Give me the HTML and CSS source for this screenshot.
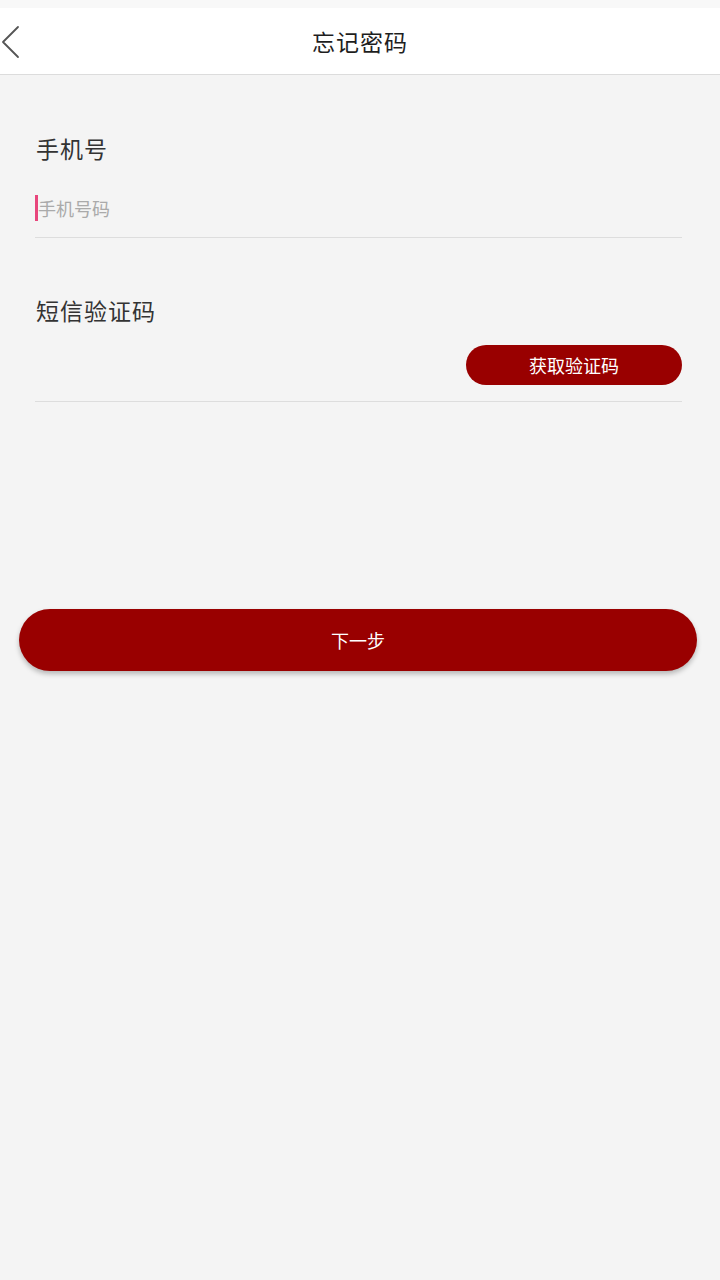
FILE: index.html
```html
<!DOCTYPE html>
<html lang="zh">
<head>
<meta charset="utf-8">
<title>忘记密码</title>
<link rel="stylesheet" href="styles.css">
</head>
<body>
<div class="statusbar"></div>
<header class="topbar">
  <span class="back">
    <svg width="20" height="34" viewBox="0 0 20 34"><path d="M17 2 L2 17 L17 32" fill="none" stroke="#555" stroke-width="1.8" stroke-linecap="round" stroke-linejoin="round"/></svg>
  </span>
  <h1 class="title">忘记密码</h1>
</header>
<main class="form">
  <section class="field field-phone">
    <div class="label">手机号</div>
    <div class="input-row phone-row">
      <span class="caret"></span><span class="placeholder">手机号码</span>
    </div>
  </section>
  <section class="field field-code">
    <div class="label">短信验证码</div>
    <div class="input-row code-row">
      <button class="code-btn">获取验证码</button>
    </div>
  </section>
</main>
<div class="next-wrap">
  <button class="next-btn">下一步</button>
</div>
</body>
</html>
```

FILE: styles.css
```css
html, body {
  margin: 0;
  padding: 0;
}
body {
  width: 720px;
  height: 1280px;
  background: #f4f4f4;
  font-family: "Noto Sans CJK SC", "Noto Sans", sans-serif;
  overflow: hidden;
}
.statusbar {
  height: 8px;
  background: #f8f8f8;
}
.topbar {
  height: 66px;
  background: #ffffff;
  border-bottom: 1px solid #dcdcdc;
  display: flex;
  align-items: center;
  justify-content: center;
  position: relative;
}
.back {
  position: absolute;
  left: 1px;
  top: 17px;
  display: flex;
}
.title {
  margin: 0;
  font-size: 23px;
  font-weight: 400;
  color: #1e1e1e;
  letter-spacing: 1px;
}
.form {
  padding: 0 38px 0 35px;
}
.field {
  border-bottom: 1px solid #dddddd;
}
.label {
  font-size: 23px;
  color: #333;
  line-height: 32px;
  letter-spacing: 1px;
  padding-left: 1px;
}
.field-phone .label {
  padding-top: 57px;
}
.field-code .label {
  padding-top: 56px;
}
.input-row {
  display: flex;
  box-sizing: border-box;
}
.phone-row {
  height: 73px;
  align-items: flex-start;
  padding-top: 31px;
}
.caret {
  width: 3px;
  height: 26px;
  background: #e8467c;
}
.placeholder {
  font-size: 18px;
  color: #aaaaaa;
  line-height: 26px;
}
.code-row {
  justify-content: flex-end;
  align-items: flex-start;
  height: 75px;
}
.code-btn {
  margin-top: 19px;
  width: 216px;
  height: 40px;
  border: none;
  border-radius: 20px;
  background: #990000;
  color: #fff;
  font-family: inherit;
  font-size: 18px;
  padding: 0;
}
.next-wrap {
  padding: 207px 23px 0 19px;
}
.next-btn {
  width: 100%;
  height: 62px;
  border: none;
  border-radius: 31px;
  background: #990000;
  color: #fff;
  font-family: inherit;
  font-size: 18px;
  box-shadow: 0 3px 5px rgba(0,0,0,0.25);
  padding: 0;
}
```
